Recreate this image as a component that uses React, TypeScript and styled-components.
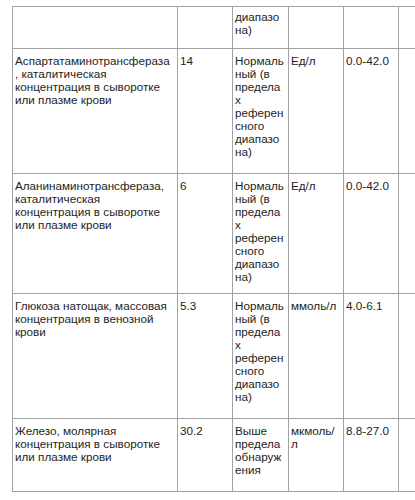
import React from 'react'
import styled, { createGlobalStyle } from 'styled-components'

const GlobalStyle = createGlobalStyle`
  html, body {
    margin: 0;
    padding: 0;
    background: #fff;
    overflow: hidden;
  }
`

const Page = styled.div`
  box-sizing: border-box;
  width: 415px;
  height: 500px;
  overflow: hidden;
  padding: 6px 0 0 12px;
  font-family: 'Liberation Sans', Arial, sans-serif;
  font-size: 11.7px;
  line-height: 13px;
  color: #1e1e1e;
`

const Table = styled.table`
  border-collapse: collapse;
  table-layout: fixed;
  width: 441px;
`

const Row = styled.tr<{ $h: number }>`
  height: ${({ $h }) => $h}px;
`

const Cell = styled.td<{ $top?: number; $pr?: number }>`
  border: 1px solid #a2a2a2;
  padding: ${({ $top = 5, $pr = 4 }) => `${$top}px ${$pr}px 0 2px`};
  vertical-align: top;
  overflow-wrap: anywhere;
`

const widths = [165, 55, 56, 55, 55, 55]

interface Item {
  name: string
  value: string
  status: string
  unit: string
  range: string
  h: number
}

const normal = 'Нормальный (в пределах референсного диапазона)'

const items: Item[] = [
  {
    name: 'Аспартатаминотрансфераза, каталитическая концентрация в сыворотке или плазме крови',
    value: '14',
    status: normal,
    unit: 'Ед/л',
    range: '0.0-42.0',
    h: 125,
  },
  {
    name: 'Аланинаминотрансфераза, каталитическая концентрация в сыворотке или плазме крови',
    value: '6',
    status: normal,
    unit: 'Ед/л',
    range: '0.0-42.0',
    h: 120,
  },
  {
    name: 'Глюкоза натощак, массовая концентрация в венозной крови',
    value: '5.3',
    status: normal,
    unit: 'ммоль/л',
    range: '4.0-6.1',
    h: 125,
  },
  {
    name: 'Железо, молярная концентрация в сыворотке или плазме крови',
    value: '30.2',
    status: 'Выше предела обнаружения',
    unit: 'мкмоль/л',
    range: '8.8-27.0',
    h: 73,
  },
]

export default function App() {
  return (
    <>
      <GlobalStyle />
      <Page>
        <Table>
          <colgroup>
            {widths.map((w, i) => (
              <col key={i} style={{ width: w }} />
            ))}
          </colgroup>
          <tbody>
            <Row $h={42}>
              <Cell $top={3} $pr={5.5} />
              <Cell $top={3} />
              <Cell $top={3}>диапазона)</Cell>
              <Cell $top={3} $pr={5} />
              <Cell $top={3} />
              <Cell $top={3} />
            </Row>
            {items.map((it) => (
              <Row key={it.name} $h={it.h}>
                <Cell $pr={5.5}>{it.name}</Cell>
                <Cell>{it.value}</Cell>
                <Cell>{it.status}</Cell>
                <Cell $pr={5}>{it.unit}</Cell>
                <Cell>{it.range}</Cell>
                <Cell />
              </Row>
            ))}
          </tbody>
        </Table>
      </Page>
    </>
  )
}
